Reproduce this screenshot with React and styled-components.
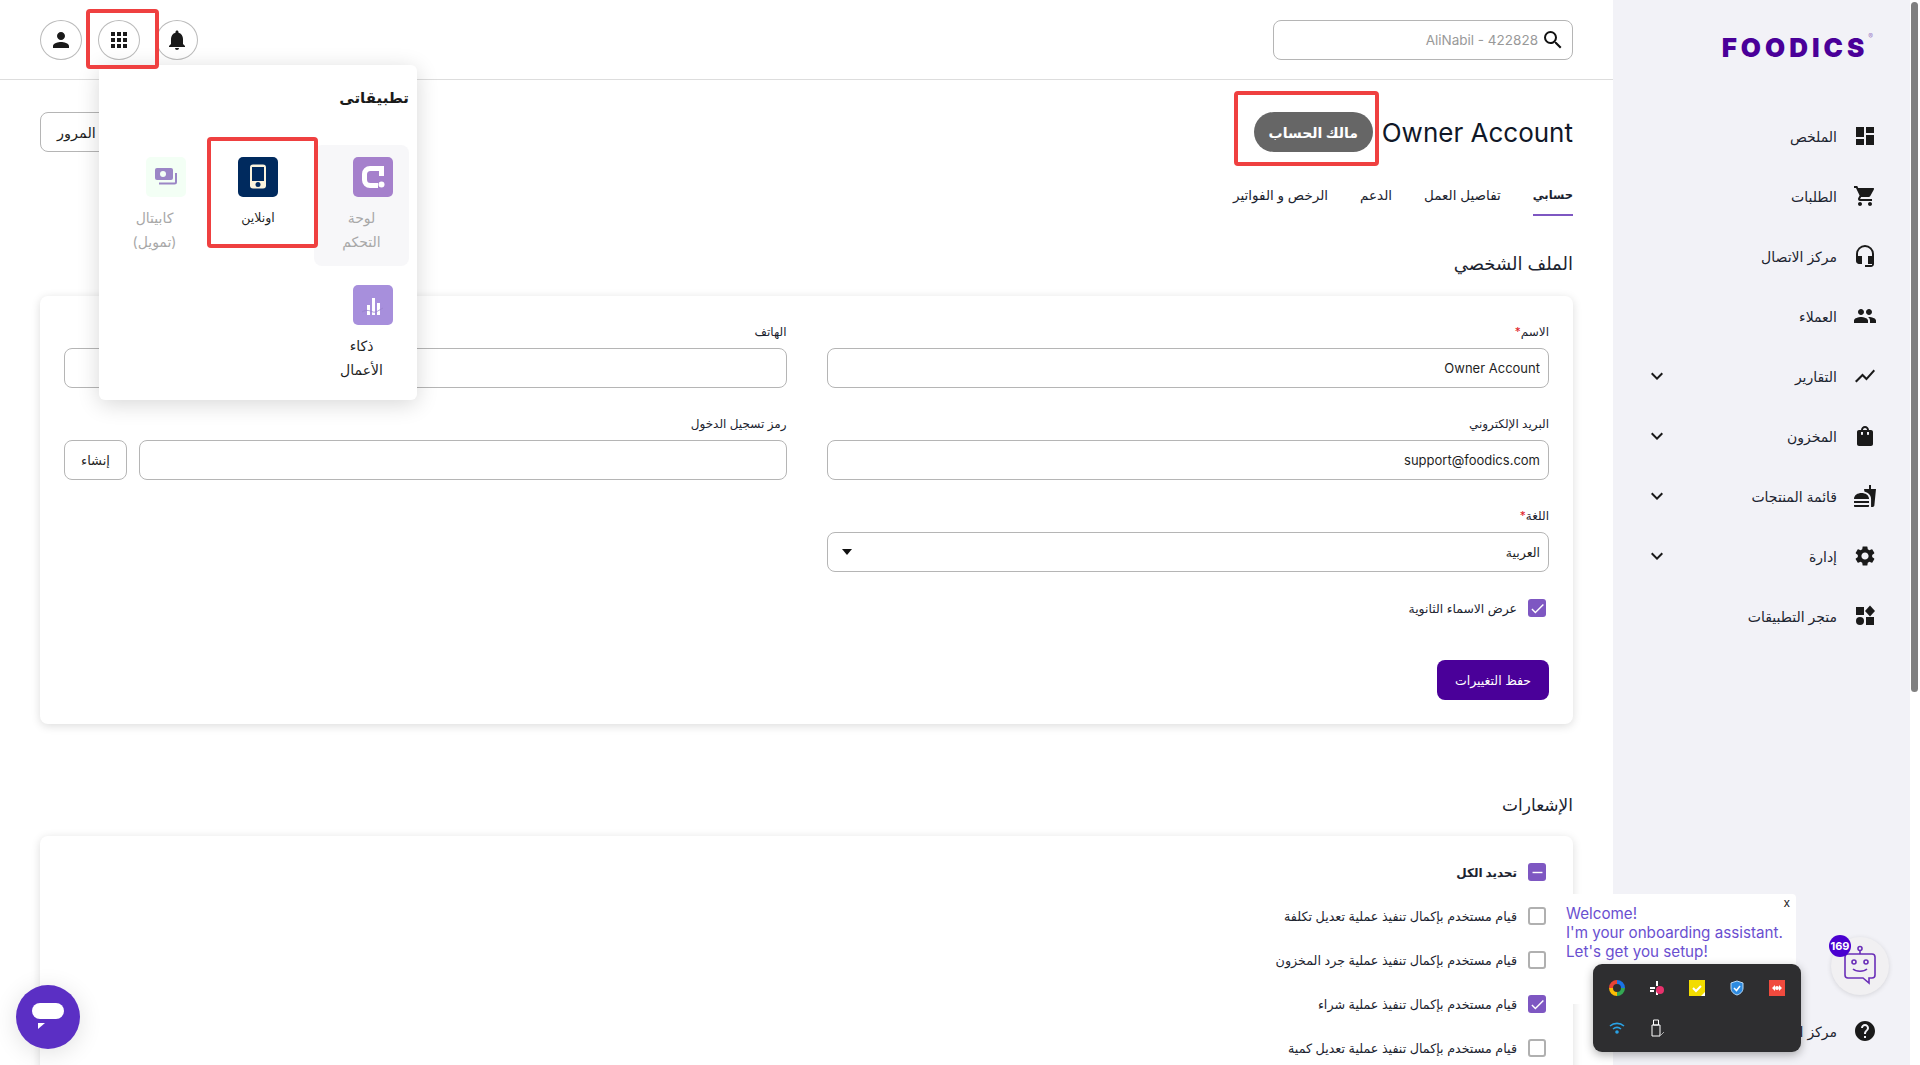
import React from 'react';
import styled, { createGlobalStyle } from 'styled-components';
import {
  MdDashboard, MdShoppingCart, MdHeadsetMic, MdPeople, MdShowChart, MdShoppingBag, MdFastfood,
  MdSettings, MdHelp, MdPerson, MdApps, MdNotifications, MdSearch, MdExpandMore,
  MdCheck, MdRemove,
} from 'react-icons/md';

const GlobalStyle = createGlobalStyle`
  html, body { margin: 0; padding: 0; height: 100%; overflow: hidden; background: #fff; }
  body { font-family: "Inter", "DejaVu Sans", sans-serif; color: #1f1f1f; }
  * { box-sizing: border-box; }
`;

const Shell = styled.div`
  direction: rtl;
  display: flex;
  height: 1065px;
  overflow: hidden;
  position: relative;
`;

const ScrollTrack = styled.div`
  width: 10px;
  flex: none;
  padding: 2px 2px 0 1px;
  background: #fff;
`;

const ScrollThumb = styled.div`
  height: 690px;
  background: #808080;
  border-radius: 4px;
`;

const Sidebar = styled.aside`
  width: 297px;
  flex: none;
  background: #f2f2f7;
  display: flex;
  flex-direction: column;
`;

const LogoRow = styled.div`
  height: 106px;
  flex: none;
  padding: 31px 37px 0 0;
  display: flex;
`;

const Logo = styled.div`
  direction: ltr;
  color: #4a0099;
  font-family: "Inter", sans-serif;
  font-weight: 900;
  font-size: 26px;
  line-height: 34px;
  height: 34px;
  letter-spacing: 4px;
  display: flex;
  sup {
    font-size: 7px;
    line-height: 12px;
    letter-spacing: 0;
    color: #9c7cc8;
    font-weight: 400;
  }
`;

const NavRow = styled.div`
  height: 60px;
  flex: none;
  padding: 0 33px 0 32px;
  display: flex;
  align-items: center;
  gap: 16px;
  font-size: 14px;
  color: #1c2430;
  svg { flex: none; }
`;

const NavLabel = styled.span`
  flex: 1;
  white-space: nowrap;
`;

const NavFooter = styled.div`
  margin-top: auto;
  padding-bottom: 4px;
`;

const Main = styled.main`
  flex: 1;
  min-width: 0;
  position: relative;
`;

const Header = styled.header`
  height: 80px;
  padding: 0 40px;
  border-bottom: 1px solid #ddd;
  display: flex;
  align-items: center;
  justify-content: space-between;
`;

const SearchBox = styled.div`
  width: 300px;
  height: 40px;
  border: 1px solid #b5b5b5;
  border-radius: 8px;
  display: flex;
  align-items: center;
  gap: 3px;
  padding-right: 7px;
  color: #111;
`;

const SearchInput = styled.input`
  flex: 1;
  min-width: 0;
  border: 0;
  outline: 0;
  background: none;
  font: inherit;
  font-size: 13.5px;
  text-align: right;
  direction: rtl;
  padding: 0;
  &::placeholder { color: #999; opacity: 1; }
`;

const HeaderIcons = styled.div`
  display: flex;
  gap: 16px;
`;

const Marked = styled.span`
  position: relative;
  display: inline-flex;
  &::after {
    content: '';
    position: absolute;
    inset: ${(p) => p.$inset};
    border: 4px solid #ef4040;
    border-radius: 4px;
    pointer-events: none;
    z-index: 5;
  }
`;

const CircleButton = styled.button`
  width: 42px;
  height: 40px;
  padding: 0;
  background: #fff;
  border: 1px solid #bbb;
  border-radius: 50%;
  color: #1a1a1a;
  display: flex;
  align-items: center;
  justify-content: center;
`;

const Content = styled.div`
  padding: 32px 40px 0;
`;

const TitleRow = styled.div`
  display: flex;
  align-items: center;
  height: 40px;
  gap: 9px;
`;

const PageTitle = styled.h1`
  direction: ltr;
  margin: 0;
  font-weight: 400;
  font-size: 26px;
  color: #101828;
`;

const Pill = styled.span`
  display: inline-flex;
  align-items: center;
  justify-content: center;
  width: 119px;
  height: 40px;
  border-radius: 20px;
  background: #666;
  color: #fff;
  font-weight: 700;
  font-size: 14px;
`;

const OutlineButton = styled.button`
  height: 40px;
  background: #fff;
  border: 1px solid #b5b5b5;
  border-radius: 8px;
  padding: 0 16px;
  font: inherit;
  font-size: 13px;
  color: #1f1f1f;
  white-space: nowrap;
`;

const ResetButton = styled(OutlineButton)`
  margin-right: auto;
  font-size: 14.5px;
`;

const Tabs = styled.nav`
  display: flex;
  gap: 32px;
  margin-top: 24px;
  height: 40px;
`;

const Tab = styled.a`
  height: 40px;
  display: flex;
  align-items: center;
  font-size: ${(p) => (p.$active ? '11.5px' : '13.5px')};
  font-weight: ${(p) => (p.$active ? 700 : 400)};
  color: #1c2430;
  border-bottom: 2px solid ${(p) => (p.$active ? '#7e57c2' : 'transparent')};
`;

const SectionTitle = styled.h2`
  margin: ${(p) => p.$top} 0 ${(p) => p.$bottom};
  height: 30px;
  line-height: 30px;
  font-weight: 400;
  font-size: ${(p) => p.$size};
  color: #1c2430;
`;

const Card = styled.section`
  background: #fff;
  border-radius: 8px;
  box-shadow: 0 2px 10px rgba(0, 0, 0, 0.14);
  padding: 24px;
`;

const FormGrid = styled.div`
  display: grid;
  grid-template-columns: 1fr 1fr;
  column-gap: 40px;
  row-gap: 24px;
`;

const Field = styled.div`
  min-width: 0;
`;

const Label = styled.label`
  display: block;
  height: 20px;
  line-height: 24px;
  margin-bottom: 8px;
  font-size: 12px;
  color: #1c2430;
  b { color: #e0202a; font-weight: 400; }
`;

const TextInput = styled.input`
  display: block;
  width: 100%;
  height: 40px;
  background: #fff;
  border: 1px solid #b5b5b5;
  border-radius: 8px;
  padding: 0 8px;
  font: inherit;
  font-size: 13px;
  color: #1f1f1f;
  outline: 0;
`;

const InputRow = styled.div`
  display: flex;
  gap: 12px;
`;

const GenerateButton = styled(OutlineButton)`
  width: 63px;
  flex: none;
  padding: 0;
`;

const SelectBox = styled.div`
  height: 40px;
  border: 1px solid #b5b5b5;
  border-radius: 8px;
  padding: 0 8px 0 14px;
  font-size: 12.5px;
  display: flex;
  align-items: center;
  justify-content: space-between;
  &::after {
    content: '';
    border: 5px solid transparent;
    border-top: 6px solid #111;
    border-bottom: 0;
  }
`;

const CheckRow = styled.div`
  height: ${(p) => p.$h || '18px'};
  display: flex;
  align-items: center;
  gap: 11px;
  padding-right: 3px;
  font-size: 12.7px;
  font-weight: ${(p) => (p.$bold ? 700 : 400)};
  color: #1c2430;
  white-space: nowrap;
`;

const SelectAllRow = styled(CheckRow)`
  font-size: 12px;
`;

const CheckBox = styled.span`
  width: 18px;
  height: 18px;
  flex: none;
  border-radius: 3px;
  display: flex;
  align-items: center;
  justify-content: center;
  color: #fff;
  background: ${(p) => (p.$on ? '#7e57c2' : '#fff')};
  border: ${(p) => (p.$on ? '0' : '2px solid #b0b0b0')};
`;

const DisplayNames = styled(CheckRow)`
  margin-top: 27px;
  font-size: 12.4px;
`;

const SaveRow = styled.div`
  margin-top: 43px;
  display: flex;
`;

const SaveButton = styled.button`
  width: 112px;
  height: 40px;
  border: 0;
  border-radius: 8px;
  background: #4a0099;
  color: #fff;
  font: inherit;
  font-size: 12.5px;
`;

const CheckList = styled.div`
  display: flex;
  flex-direction: column;
  gap: 20px;
`;

const Popover = styled.div`
  position: absolute;
  left: 99px;
  top: 65px;
  width: 318px;
  height: 335px;
  background: #fff;
  border-radius: 6px;
  box-shadow: 0 4px 22px rgba(0, 0, 0, 0.16);
  padding: 18px 8px 7px;
  z-index: 4;
`;

const PopoverTitle = styled.h3`
  margin: 0 0 32px;
  height: 30px;
  line-height: 30px;
  font-size: 15px;
  font-weight: 700;
  color: #1a1a1a;
`;

const AppGrid = styled.div`
  display: flex;
  flex-wrap: wrap;
  gap: 7px 20px;
  align-items: flex-start;
`;

const AppItem = styled.div`
  width: ${(p) => (p.$narrow ? '72px' : '95px')};
  padding: 12px 16px;
  border-radius: 8px;
  background: ${(p) => (p.$current ? '#f7f7f9' : 'transparent')};
  display: flex;
  flex-direction: column;
  gap: 9px;
  color: ${(p) => (p.$muted ? '#a8a8a8' : '#1f1f1f')};
  font-size: 14px;
  line-height: 24px;
  text-align: center;
  position: relative;
`;

const MarkedItem = styled(AppItem)`
  font-size: 12.5px;
  &::after {
    content: '';
    position: absolute;
    inset: -8px -24px -6px -15px;
    border: 4px solid #ef4040;
    border-radius: 4px;
    z-index: 5;
  }
`;

const AppIcon = styled.span`
  width: 40px;
  height: 40px;
  border-radius: 5px;
  background: ${(p) => p.$bg};
  display: flex;
  align-items: center;
  justify-content: center;
`;

const ChatFab = styled.button`
  position: absolute;
  left: 16px;
  bottom: 16px;
  width: 64px;
  height: 64px;
  padding: 0;
  border: 0;
  border-radius: 50%;
  background: #5b2fc4;
  box-shadow: 0 4px 24px rgba(0, 0, 0, 0.12);
  display: flex;
  align-items: center;
  justify-content: center;
  z-index: 6;
`;

const Bubble = styled.div`
  position: absolute;
  left: 1556px;
  top: 894px;
  width: 240px;
  height: 110px;
  background: #fff;
  border-radius: 4px;
  padding: 10px 10px;
  direction: ltr;
  color: #6a4fd0;
  font-size: 15.2px;
  line-height: 19px;
  z-index: 6;
`;

const BubbleClose = styled.span`
  position: absolute;
  right: 6px;
  top: 2px;
  font-size: 12px;
  line-height: 14px;
  color: #222;
`;

const BotButton = styled.div`
  position: absolute;
  left: 1831px;
  top: 937px;
  width: 58px;
  height: 58px;
  border-radius: 50%;
  background: #f1f0f2;
  box-shadow: 0 1px 5px rgba(0, 0, 0, 0.12);
  display: flex;
  align-items: center;
  justify-content: center;
  z-index: 6;
`;

const BotBadge = styled.span`
  position: absolute;
  left: -2px;
  top: -2px;
  width: 22px;
  height: 22px;
  border-radius: 50%;
  background: #4a00d0;
  color: #fff;
  font-size: 11px;
  font-weight: 700;
  direction: ltr;
  display: flex;
  align-items: center;
  justify-content: center;
`;

const Tray = styled.div`
  position: absolute;
  left: 1593px;
  top: 964px;
  width: 208px;
  height: 88px;
  background: #2e2e30;
  border-radius: 9px;
  box-shadow: 0 3px 10px rgba(0, 0, 0, 0.3);
  z-index: 7;
  direction: ltr;
  display: grid;
  grid-template-columns: repeat(5, 40px);
  grid-auto-rows: 40px;
  padding: 4px;
`;

const TrayCell = styled.span`
  display: flex;
  align-items: center;
  justify-content: center;
`;

const StoreIcon = ({ size }) => (
  <svg width={size} height={size} viewBox="0 0 24 24" fill="#1a1a1a">
    <rect x="3" y="3" width="8" height="8" />
    <path d="M17 1.500l5 5.500-5 5.500-5-5.500z" />
    <circle cx="7" cy="17" r="4" />
    <rect x="13" y="13" width="8" height="8" />
  </svg>
);

const navItems = [
  ['الملخص', MdDashboard],
  ['الطلبات', MdShoppingCart],
  ['مركز الاتصال', MdHeadsetMic],
  ['العملاء', MdPeople],
  ['التقارير', MdShowChart, true],
  ['المخزون', MdShoppingBag, true],
  ['قائمة المنتجات', MdFastfood, true],
  ['إدارة', MdSettings, true],
  ['متجر التطبيقات', StoreIcon],
];

const notifications = [
  ['قيام مستخدم بإكمال تنفيذ عملية تعديل تكلفة', false],
  ['قيام مستخدم بإكمال تنفيذ عملية جرد المخزون', false],
  ['قيام مستخدم بإكمال تنفيذ عملية شراء', true],
  ['قيام مستخدم بإكمال تنفيذ عملية تعديل كمية', false],
];

const DashIcon = () => (
  <svg width="26" height="26" viewBox="0 0 26 26">
    <path d="M24 2H10a8 8 0 0 0-8 8v6a8 8 0 0 0 8 8h8v-5h-7.500A3.500 3.500 0 0 1 7 15.500v-5A3.500 3.500 0 0 1 10.500 7H19v5h5z" fill="#fff" />
    <circle cx="21.500" cy="20.500" r="3" fill="#fff" />
  </svg>
);

const PhoneIcon = () => (
  <svg width="20" height="26" viewBox="0 0 20 26">
    <rect x="2" y="0.500" width="16" height="24" rx="3" fill="#fbf3dc" />
    <rect x="4" y="3" width="12" height="14" fill="#002a5e" />
    <circle cx="10" cy="20.500" r="2.500" fill="#002a5e" />
  </svg>
);

const MoneyIcon = () => (
  <svg width="24" height="20" viewBox="0 0 24 20">
    <rect x="1" y="1" width="18" height="12" rx="2" fill="#9b86c6" />
    <circle cx="9" cy="7" r="3" fill="#f3fff5" />
    <path d="M22 6v9a1.500 1.500 0 0 1-1.500 1.500H5" fill="none" stroke="#9b86c6" strokeWidth="2" />
  </svg>
);

const BarsIcon = () => (
  <svg width="24" height="24" viewBox="0 0 24 24">
    <path d="M6 12h3v10H6zM11 5h3v17h-3zM16 10h3v12h-3z" fill="#fff" />
    <path d="M1 19c5-3 8-1 11 0s6-2 10-4" fill="none" stroke="#9780cc" strokeWidth="0.800" />
  </svg>
);

const BotIcon = () => (
  <svg width="36" height="42" viewBox="0 0 36 42" fill="none" stroke="#6a2fb8" strokeWidth="1.600">
    <circle cx="18" cy="3.500" r="2" />
    <path d="M18 5.500V9" />
    <path d="M6 9h24a3 3 0 0 1 3 3v18a3 3 0 0 1-3 3h-3v5l-6-5H6a3 3 0 0 1-3-3V12a3 3 0 0 1 3-3z" />
    <circle cx="12" cy="17" r="2" />
    <circle cx="24" cy="17" r="2" />
    <path d="M11 24c3 3 11 3 14 0" />
  </svg>
);

const ChatGlyph = () => (
  <svg width="32" height="28" viewBox="0 0 32 28">
    <rect x="0" y="0" width="32" height="16" rx="8" fill="#fff" />
    <path d="M6 26v-6h7z" fill="#fff" />
  </svg>
);

const TrayIcons = [
  <svg key="a" width="16" height="16" viewBox="0 0 16 16" fill="none" strokeWidth="4">
    <path d="M2 8a6 6 0 0 1 6-6" stroke="#ea4335" />
    <path d="M8 2a6 6 0 0 1 6 6" stroke="#1a73e8" />
    <path d="M14 8a6 6 0 0 1-6 6" stroke="#34a853" />
    <path d="M8 14a6 6 0 0 1-6-6" stroke="#fbbc04" />
    <circle cx="8" cy="8" r="2.500" fill="#2e2e30" strokeWidth="0" />
  </svg>,
  <svg key="b" width="16" height="16" viewBox="0 0 16 16">
    <path d="M1 7h5v2H1zM7 1h2v5H7zM7 10h2v5H7zM1 10h4v2H1z" fill="#fff" />
    <circle cx="11" cy="10" r="4" fill="#e8316c" />
  </svg>,
  <svg key="c" width="16" height="16" viewBox="0 0 16 16">
    <rect width="16" height="16" fill="#f2dc00" />
    <path d="M4 8l3 3 5-5" fill="none" stroke="#fff" strokeWidth="2" />
    <path d="M12 16l4-4v4z" fill="#fff" />
  </svg>,
  <svg key="d" width="16" height="16" viewBox="0 0 16 16">
    <path d="M8 1l6 2v5c0 4-3 6-6 7-3-1-6-3-6-7V3z" fill="#2e8be0" stroke="#bcdcf7" />
    <path d="M5 8l2.500 2.500L11 6" fill="none" stroke="#fff" strokeWidth="1.500" />
  </svg>,
  <svg key="e" width="16" height="16" viewBox="0 0 16 16">
    <rect width="16" height="16" fill="#f04a3e" />
    <path d="M3 8l3-3v6zM13 8l-3-3v6z" fill="#fff" />
    <circle cx="8" cy="8" r="2" fill="#fff" />
  </svg>,
  <svg key="f" width="16" height="16" viewBox="0 0 16 16" fill="none" stroke="#2aa3e6" strokeWidth="1.600">
    <path d="M1 6c4-3.500 10-3.500 14 0" />
    <path d="M4 9c2.500-2 5.500-2 8 0" />
    <circle cx="8" cy="12" r="1" fill="#2aa3e6" />
  </svg>,
  <svg key="g" width="16" height="18" viewBox="0 0 16 18" fill="none" stroke="#fff">
    <path d="M4.500 1h5v5h-5zM3 6h8v11H3z" />
    <path d="M10 15l1.500 1.500L15 13" stroke="#aaa" />
  </svg>,
];

const App = () => {
  return (
    <>
      <GlobalStyle />
      <Shell>
        <ScrollTrack>
          <ScrollThumb />
        </ScrollTrack>

        <Sidebar>
          <LogoRow>
            <Logo>FOODICS<sup>®</sup></Logo>
          </LogoRow>
          {navItems.map(([label, Icon, more]) => (
            <NavRow key={label}>
              <Icon size={24} color="#1a1a1a" />
              <NavLabel>{label}</NavLabel>
              {more && <MdExpandMore size={24} color="#1a1a1a" />}
            </NavRow>
          ))}
          <NavFooter>
            <NavRow>
              <MdHelp size={24} color="#1a1a1a" />
              <NavLabel>مركز المساعدة</NavLabel>
            </NavRow>
          </NavFooter>
        </Sidebar>

        <Main>
          <Header>
            <SearchBox>
              <MdSearch size={24} />
              <SearchInput placeholder="AliNabil - 422828" readOnly />
            </SearchBox>
            <HeaderIcons>
              <CircleButton><MdNotifications size={24} /></CircleButton>
              <Marked $inset="-11px -19px -9px -12px">
                <CircleButton><MdApps size={24} /></CircleButton>
              </Marked>
              <CircleButton><MdPerson size={24} /></CircleButton>
            </HeaderIcons>
          </Header>

          <Content>
            <TitleRow>
              <PageTitle>Owner Account</PageTitle>
              <Marked $inset="-21px -6px -14px -20px">
                <Pill>مالك الحساب</Pill>
              </Marked>
              <ResetButton>تغيير كلمة المرور</ResetButton>
            </TitleRow>

            <Tabs>
              <Tab $active>حسابي</Tab>
              <Tab>تفاصيل العمل</Tab>
              <Tab>الدعم</Tab>
              <Tab>الرخص و الفواتير</Tab>
            </Tabs>

            <SectionTitle $top="33px" $bottom="17px" $size="18px">الملف الشخصي</SectionTitle>
            <Card>
              <FormGrid>
                <Field>
                  <Label>الاسم<b>*</b></Label>
                  <TextInput defaultValue="Owner Account" />
                </Field>
                <Field>
                  <Label>الهاتف</Label>
                  <TextInput />
                </Field>
                <Field>
                  <Label>البريد الإلكتروني</Label>
                  <TextInput defaultValue="support@foodics.com" />
                </Field>
                <Field>
                  <Label>رمز تسجيل الدخول</Label>
                  <InputRow>
                    <TextInput />
                    <GenerateButton>إنشاء</GenerateButton>
                  </InputRow>
                </Field>
                <Field>
                  <Label>اللغة<b>*</b></Label>
                  <SelectBox>العربية</SelectBox>
                </Field>
              </FormGrid>
              <DisplayNames>
                <CheckBox $on><MdCheck size={17} /></CheckBox>
                عرض الاسماء الثانوية
              </DisplayNames>
              <SaveRow>
                <SaveButton>حفظ التغييرات</SaveButton>
              </SaveRow>
            </Card>

            <SectionTitle $top="66px" $bottom="16px" $size="17px">الإشعارات</SectionTitle>
            <Card>
              <CheckList>
                <SelectAllRow $h="24px" $bold>
                  <CheckBox $on><MdRemove size={17} /></CheckBox>
                  تحديد الكل
                </SelectAllRow>
                {notifications.map(([text, on]) => (
                  <CheckRow key={text} $h="24px">
                    <CheckBox $on={on}>{on && <MdCheck size={17} />}</CheckBox>
                    {text}
                  </CheckRow>
                ))}
              </CheckList>
            </Card>
          </Content>

          <Popover>
            <PopoverTitle>تطبيقاتى</PopoverTitle>
            <AppGrid>
              <AppItem $current $muted>
                <AppIcon $bg="#a580cc"><DashIcon /></AppIcon>
                لوحة التحكم
              </AppItem>
              <MarkedItem $narrow>
                <AppIcon $bg="#002a5e"><PhoneIcon /></AppIcon>
                اونلاين
              </MarkedItem>
              <AppItem $muted>
                <AppIcon $bg="#f3fff5"><MoneyIcon /></AppIcon>
                كابيتال (تمويل)
              </AppItem>
              <AppItem>
                <AppIcon $bg="#a78fdc"><BarsIcon /></AppIcon>
                ذكاء الأعمال
              </AppItem>
            </AppGrid>
          </Popover>

          <ChatFab><ChatGlyph /></ChatFab>
        </Main>

        <Bubble>
          <BubbleClose>x</BubbleClose>
          Welcome!<br />I'm your onboarding assistant.<br />Let's get you setup!
        </Bubble>
        <BotButton>
          <BotBadge>169</BotBadge>
          <BotIcon />
        </BotButton>
        <Tray>
          {TrayIcons.map((icon) => <TrayCell key={icon.key}>{icon}</TrayCell>)}
        </Tray>
      </Shell>
    </>
  );
};

export default App;
